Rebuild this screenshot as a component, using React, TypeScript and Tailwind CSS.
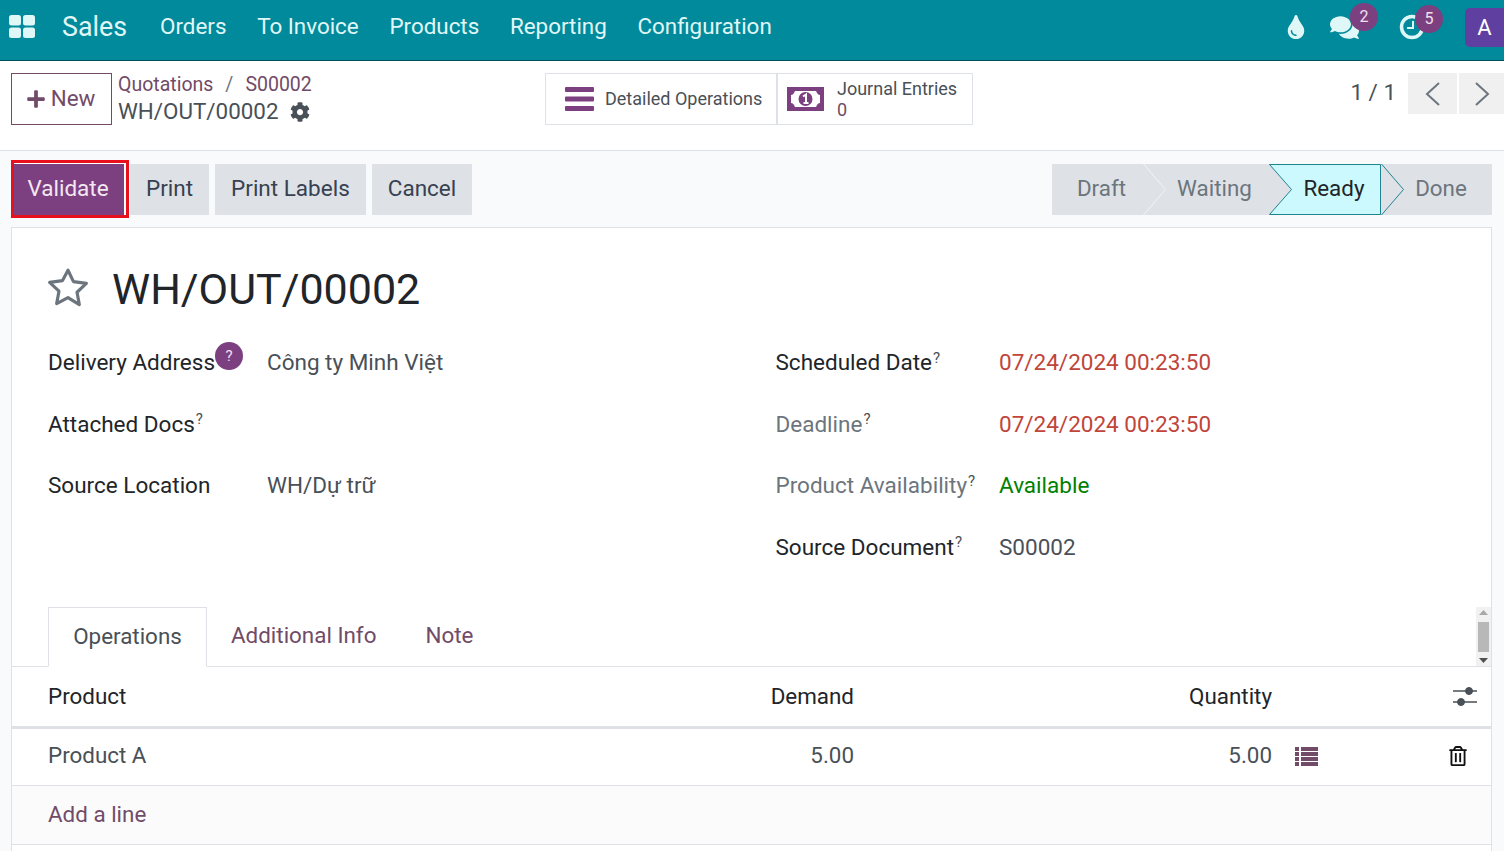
import React from "react";
import { FaPlus, FaCog, FaTint, FaComments, FaRegTrashAlt } from "react-icons/fa";

function Apps() {
  return (
    <svg width="26" height="24" viewBox="0 0 26 24" className="text-[#e0f7f7]" fill="currentColor">
      <rect x="0" y="0" width="12" height="10.5" rx="2.5" />
      <rect x="14" y="0" width="12" height="10.5" rx="2.5" />
      <rect x="0" y="12.5" width="12" height="10.5" rx="2.5" />
      <rect x="14" y="12.5" width="12" height="10.5" rx="2.5" />
    </svg>
  );
}

function Clock() {
  return (
    <svg width="26" height="26" viewBox="0 0 26 26" fill="none" stroke="#e0f7f7">
      <circle cx="13" cy="13" r="10.5" strokeWidth="3.5" />
      <path d="M14 7v7H8" strokeWidth="2" />
    </svg>
  );
}

function Sliders() {
  return (
    <svg width="24" height="22" viewBox="0 0 24 22" fill="#495057" stroke="#495057">
      <path d="M0 6h24M0 17h24" strokeWidth="1.5" />
      <circle cx="16" cy="6" r="3.5" />
      <circle cx="8" cy="17" r="3.5" />
    </svg>
  );
}

function Bars() {
  return (
    <svg width="29" height="24" viewBox="0 0 29 24" fill="#7c3f7f" className="shrink-0">
      <rect width="29" height="5" y="0" rx="1" />
      <rect width="29" height="5" y="9.5" rx="1" />
      <rect width="29" height="5" y="19" rx="1" />
    </svg>
  );
}

function Money() {
  return (
    <svg width="37" height="24" viewBox="0 0 37 24" className="shrink-0">
      <rect width="37" height="24" fill="#7c3f7f" />
      <path d="M8 4h21l1 2q1 2 3 2v8q-2 0-3 2l-1 2H8l-1-2q-1-2-3-2V8q2 0 3-2z" fill="#fff" />
      <circle cx="18.5" cy="12" r="7" fill="#7c3f7f" />
      <path d="M16 9.5l3-2V16M16.5 16h5" stroke="#fff" strokeWidth="2" fill="none" />
    </svg>
  );
}

function ListIcon() {
  return (
    <svg width="23" height="19" viewBox="0 0 23 19" fill="#714b67" className="shrink-0">
      {[0, 5, 10, 15].map((y) => (
        <g key={y}>
          <rect x="0" y={y} width="4" height="4" />
          <rect x="6" y={y} width="17" height="4" />
        </g>
      ))}
    </svg>
  );
}

function Star() {
  return (
    <svg width="42" height="40" viewBox="0 0 40 38" fill="none" stroke="#6c757d" strokeWidth="3" strokeLinejoin="round" className="-ml-px -mt-[5px]">
      <path d="M20 3l5.2 10.9 12.3 1.7-8.9 8.4 2.2 11.8L20 29.1 9.2 34.8l2.2-11.8-8.9-8.4 12.3-1.7z" />
    </svg>
  );
}

function Badge({ n, className }: { n: number; className: string }) {
  return (
    <span className={`absolute flex h-[28px] w-[28px] items-center justify-center rounded-full bg-[#7c3f7f] text-[16px] text-[#f0e0ee] ${className}`}>
      {n}
    </span>
  );
}

function Chevron({ stroke }: { stroke: string }) {
  return (
    <svg className="absolute left-0 top-0 h-[51px] w-[24px]" viewBox="0 0 24 51" fill="none" stroke={stroke}>
      <path d="M0.5 0l22 25.5L0.5 51" strokeWidth="1" />
    </svg>
  );
}

function Help() {
  return <sup className="ml-px text-[15px] font-normal text-[#495057]">?</sup>;
}

function Btn({ children }: { children: React.ReactNode }) {
  return (
    <button className="flex h-[51px] items-center bg-[#dee2e6] px-4 text-[22.5px] text-[#374151]">{children}</button>
  );
}

function Field({ label, value, muted, labelWidth }: { label: React.ReactNode; value?: React.ReactNode; muted?: boolean; labelWidth: string }) {
  return (
    <div className="flex h-[61.5px] items-center text-[22.5px]">
      <div className={`${labelWidth} shrink-0 ${muted ? "text-[#6c757d]" : "text-[#212529]"}`}>{label}</div>
      <div className="text-[#495057]">{value}</div>
    </div>
  );
}

export default function App() {
  return (
    <div className="h-[851px] w-[1504px] overflow-hidden bg-[#f9fafb] font-['Roboto',sans-serif] text-[#212529]">
      {/* navbar */}
      <header className="flex h-[61px] items-center border-b border-[#004f5a] bg-[#008a9b] pb-[6px] text-[#e0f7f7]">
        <div className="ml-[9px]"><Apps /></div>
        <div className="ml-[27px] text-[26.8px]">Sales</div>
        <nav className="ml-[33px] flex gap-[30.7px] text-[22.4px]">
          <span>Orders</span>
          <span>To Invoice</span>
          <span>Products</span>
          <span>Reporting</span>
          <span>Configuration</span>
        </nav>
        <div className="ml-auto flex items-center">
          <FaTint className="mr-[22px] text-[24px]" />
          <div className="relative mr-[40px]">
            <FaComments className="text-[29px]" />
            <Badge n={2} className="-top-[10px] left-[20px]" />
          </div>
          <div className="relative mr-[40px]">
            <Clock />
            <Badge n={5} className="-top-[9px] left-[16px]" />
          </div>
          <div className="flex h-[39px] w-[39px] items-center justify-center rounded-l-[5px] bg-[#5f3f9f] text-[22px] text-white">A</div>
        </div>
      </header>

      {/* control panel */}
      <section className="flex h-[90px] items-start border-b border-[#dee2e6] bg-white pt-[12px]">
        <button className="ml-[11px] flex h-[52px] w-[101px] items-center justify-center gap-[5px] border border-[#714b67] pr-[2px] text-[22.4px] text-[#714b67]">
          <FaPlus className="text-[20px]" /> New
        </button>
        <div className="ml-[6px] w-[427px] text-[#714b67]">
          <div className="flex h-[23px] items-center text-[19.5px]">
            <span>Quotations</span>
            <span className="mx-[12px] text-[#6c757d]">/</span>
            <span>S00002</span>
          </div>
          <div className="-mt-px flex items-center gap-[11px] text-[22.4px] text-[#495057]">
            WH/OUT/00002 <FaCog className="text-[20px]" />
          </div>
        </div>
        <div className="flex h-[52px] w-[428px] border border-[#dee2e6]">
          <div className="flex w-[232px] items-center gap-[11px] whitespace-nowrap border-r-2 border-[#dee2e6] pl-[19px] text-[18px] text-[#495057]">
            <Bars />
            <span className="-mt-[2px]">Detailed Operations</span>
          </div>
          <div className="flex items-center gap-[13px] pl-[9px] text-[18px] text-[#495057]">
            <Money />
            <div className="leading-[21px]">
              <div>Journal Entries</div>
              <div className="text-[#714b67]">0</div>
            </div>
          </div>
        </div>
        <div className="ml-auto flex items-center">
          <span className="mb-[2px] mr-[12px] text-[22.4px] text-[#495057]">1 / 1</span>
          <button className="flex h-[41px] w-[49px] items-center justify-center bg-[#f0f0f0]">
            <svg width="16" height="24" viewBox="0 0 16 24" fill="none" stroke="#6c757d" strokeWidth="2"><path d="M14 1L2 12l12 11" /></svg>
          </button>
          <button className="ml-[2px] flex h-[41px] w-[45px] items-center justify-center bg-[#f0f0f0]">
            <svg width="16" height="24" viewBox="0 0 16 24" fill="none" stroke="#6c757d" strokeWidth="2"><path d="M2 1l12 11L2 23" /></svg>
          </button>
        </div>
      </section>

      {/* status bar */}
      <section className="flex h-[76px] items-center pl-[11px] pr-[12px]">
        <div className="flex h-[58px] w-[118px] items-center border-[3px] border-[#e8101c] bg-white pr-[2px]">
          <button className="flex h-[51px] flex-1 items-center justify-center bg-[#7c3f7f] pr-[2px] text-[22.5px] text-[#f3e8f2]">Validate</button>
        </div>
        <div className="ml-[1px] flex items-center gap-[6px]">
          <Btn>Print</Btn>
          <Btn>Print Labels</Btn>
          <Btn>Cancel</Btn>
        </div>
        <div className="ml-auto flex h-[51px] bg-[#dee2e6] text-[22.4px] text-[#6c757d]">
          <div className="flex w-[91px] items-center justify-center pl-[8px]">Draft</div>
          <div className="relative flex w-[126px] items-center justify-center pl-[17px]">
            <Chevron stroke="#f3f4f6" />
            Waiting
          </div>
          <div className="relative flex w-[112px] items-center justify-center pl-[18px] text-[#212529]">
            <svg className="absolute left-0 top-0 h-[51px] w-[112px]" viewBox="0 0 112 51" fill="#ccf9fd" stroke="#1f8490">
              <path d="M0.5 0.5H111.5V50.5H0.5L22.5 25.5Z" strokeWidth="1" />
            </svg>
            <span className="relative">Ready</span>
          </div>
          <div className="relative flex w-[111px] items-center justify-center pl-[9px]">
            <Chevron stroke="#1f8490" />
            Done
          </div>
        </div>
      </section>

      {/* sheet */}
      <main className="ml-[11px] mr-[12px] h-[700px] border border-[#dee2e6] bg-white">
        <div className="flex h-[123px] items-center pl-[36px]">
          <Star />
          <h1 className="ml-[23px] text-[43px] leading-none text-[#212529]">WH/OUT/00002</h1>
        </div>
        <div className="flex h-[256px] pl-[36px]">
          <div className="-mt-[18.5px] w-[727.5px]">
            <Field
              labelWidth="w-[219px]"
              label={
                <span className="relative">
                  Delivery Address
                  <span className="absolute -top-[7px] left-[167px] flex h-[28px] w-[28px] items-center justify-center rounded-full bg-[#7c3f7f] text-[15px] text-[#f0e0ee]">?</span>
                </span>
              }
              value="Công ty Minh Việt"
            />
            <Field labelWidth="w-[219px]" label={<>Attached Docs<Help /></>} />
            <Field labelWidth="w-[219px]" label="Source Location" value="WH/Dự trữ" />
          </div>
          <div className="-mt-[18.5px]">
            <Field labelWidth="w-[223.5px]" label={<>Scheduled Date<Help /></>} value={<span className="text-[#c0453b]">07/24/2024 00:23:50</span>} />
            <Field labelWidth="w-[223.5px]" muted label={<>Deadline<Help /></>} value={<span className="text-[#c0453b]">07/24/2024 00:23:50</span>} />
            <Field labelWidth="w-[223.5px]" muted label={<>Product Availability<Help /></>} value={<span className="text-[#008000]">Available</span>} />
            <Field labelWidth="w-[223.5px]" label={<>Source Document<Help /></>} value="S00002" />
          </div>
        </div>

        {/* tabs */}
        <div className="flex h-[60px] items-end border-b border-[#dee2e6] pl-[36px] text-[22.4px] text-[#714b67]">
          <div className="relative -mb-px flex h-[60px] w-[159px] items-center justify-center border border-[#dee2e6] border-b-white bg-white text-[#495057]">Operations</div>
          <div className="flex h-[61px] items-center pl-[24px]">Additional Info</div>
          <div className="flex h-[61px] items-center pl-[49px]">Note</div>
          <div className="ml-auto flex h-[59px] w-[15px] flex-col items-center justify-between bg-[#f1f1f1] py-[3px]">
            <svg width="9" height="5" viewBox="0 0 9 5" fill="#a8a8a8"><path d="M4.5 0L9 5H0z" /></svg>
            <div className="h-[30px] w-[11px] bg-[#b8b8b8]" />
            <svg width="9" height="5" viewBox="0 0 9 5" fill="#505050"><path d="M0 0h9L4.5 5z" /></svg>
          </div>
        </div>

        {/* table */}
        <div className="flex h-[62px] items-center border-b-[3px] border-[#dee2e6] text-[22.4px] text-[#212529]">
          <div className="w-[600px] pl-[36px]">Product</div>
          <div className="w-[242px] text-right">Demand</div>
          <div className="w-[418px] text-right">Quantity</div>
          <div className="ml-auto mb-[2px] mr-[14px]"><Sliders /></div>
        </div>
        <div className="flex h-[57px] items-center border-b border-[#dee2e6] pb-[3px] text-[22.4px] text-[#495057]">
          <div className="w-[600px] pl-[36px]">Product A</div>
          <div className="w-[242px] text-right">5.00</div>
          <div className="w-[418px] text-right">5.00</div>
          <div className="ml-[23px] mt-[2px]"><ListIcon /></div>
          <div className="ml-auto mr-[23px]"><FaRegTrashAlt className="text-[20px] text-[#111]" /></div>
        </div>
        <div className="flex h-[59px] items-center border-b border-[#dee2e6] bg-[#fbfbfb] pl-[36px] text-[22.4px] text-[#714b67]">Add a line</div>
      </main>
    </div>
  );
}
